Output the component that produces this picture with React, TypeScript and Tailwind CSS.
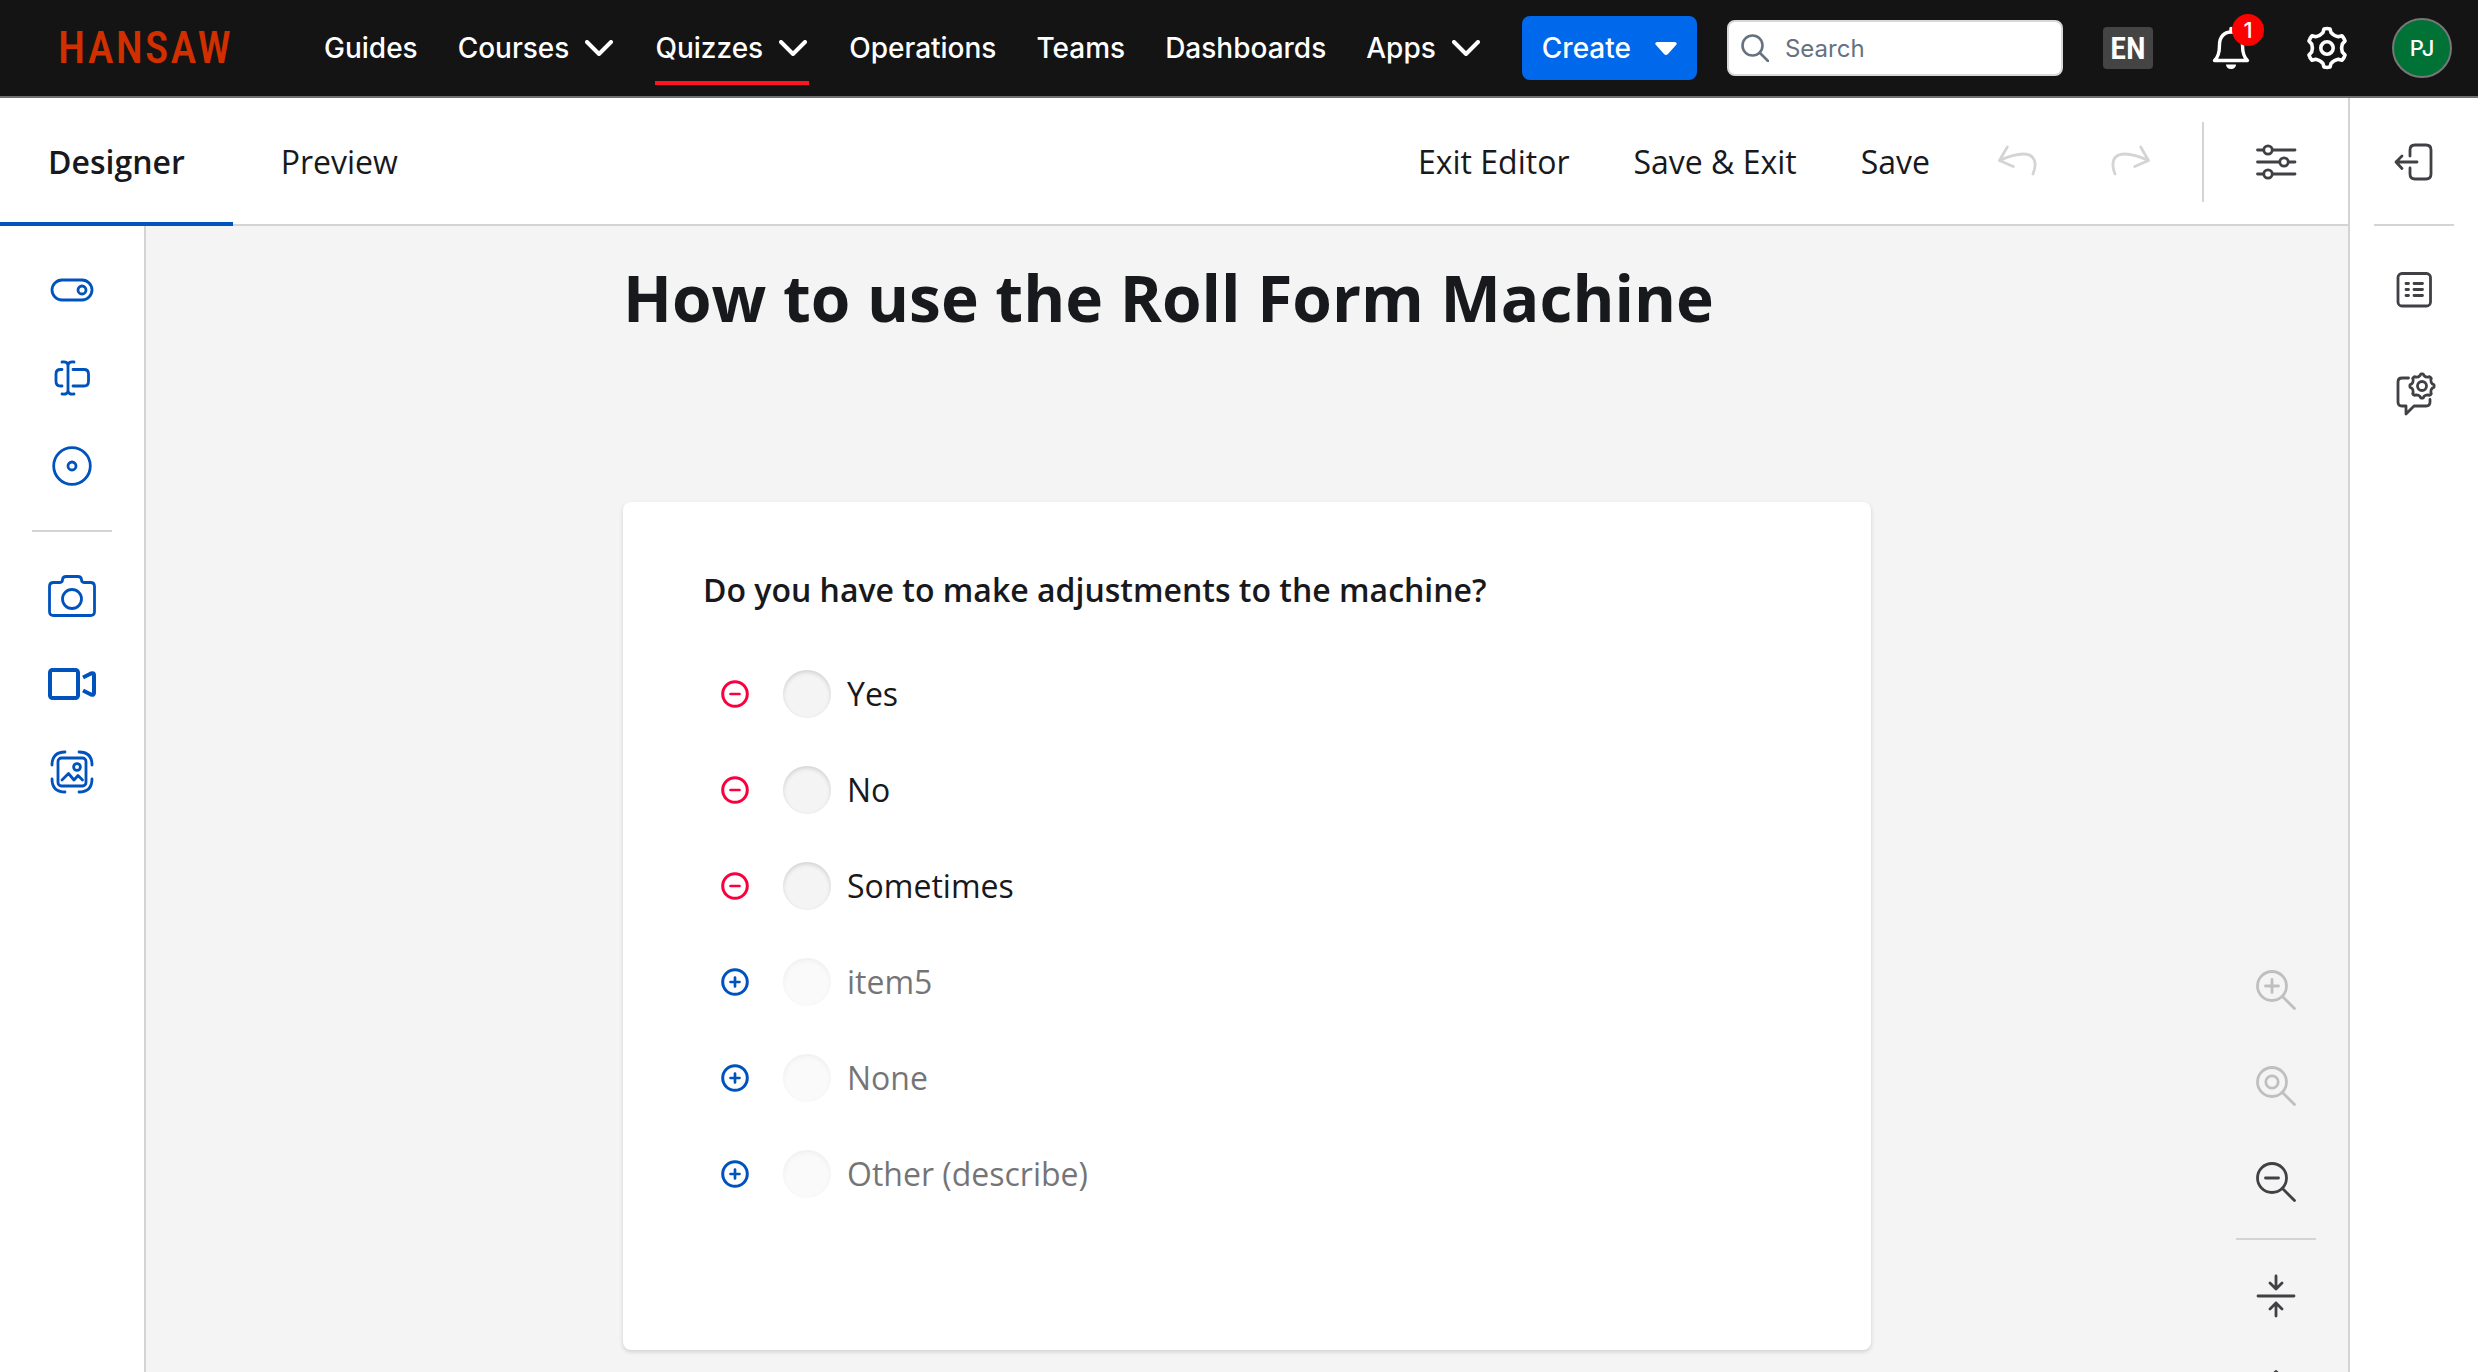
import React, { useState } from "react";

type IconProps = { className?: string; children: React.ReactNode };

function Icon({ className = "size-12", children }: IconProps) {
  return (
    <svg
      viewBox="0 0 48 48"
      className={className}
      fill="none"
      stroke="currentColor"
      strokeWidth={2.8}
      strokeLinecap="round"
      strokeLinejoin="round"
      aria-hidden="true"
    >
      {children}
    </svg>
  );
}

/* Scalloped outline used by the gear glyphs. */
function cogPath(cx: number, cy: number, outer: number, inner: number, teeth: number, flat: number) {
  const step = (Math.PI * 2) / teeth;
  const at = (r: number, a: number) =>
    `${(cx + r * Math.sin(a)).toFixed(2)} ${(cy - r * Math.cos(a)).toFixed(2)}`;
  let d = "";
  for (let i = 0; i < teeth; i++) {
    const a = i * step;
    d += `${i ? "L" : "M"}${at(outer, a - step * flat)}`;
    d += `Q${at(outer * 1.03, a)} ${at(outer, a + step * flat)}`;
    d += `L${at(inner * 1.03, a + step * (flat + 0.1))}`;
    d += `Q${at(inner * 0.9, a + step * 0.5)} ${at(inner * 1.03, a + step * (0.9 - flat))}`;
  }
  return d + "Z";
}

function Chevron() {
  return (
    <svg viewBox="0 0 30 16" className="h-4 w-[30px]" fill="none" stroke="currentColor" strokeWidth={4} strokeLinecap="round" strokeLinejoin="round" aria-hidden="true">
      <path d="M2 2 14 14 26 2" />
    </svg>
  );
}

const navItems = [
  { label: "Guides" },
  { label: "Courses", menu: true },
  { label: "Quizzes", menu: true, active: true },
  { label: "Operations" },
  { label: "Teams" },
  { label: "Dashboards" },
  { label: "Apps", menu: true },
];

function TopBar() {
  return (
    <header className="flex h-[98px] shrink-0 items-center border-b-2 border-[#707070] bg-[#141414] pr-[26px] pl-[58px] font-['Inter',sans-serif] text-white">
      <a href="#home" className="w-[266px] shrink-0 font-['Roboto_Condensed','Roboto',sans-serif] text-[44px] leading-none font-medium tracking-wider text-[#d12f00]">
        HANSAW
      </a>
      <nav className="flex items-center gap-10 text-[28px] leading-9 font-medium">
        {navItems.map((item) => (
          <a key={item.label} href={`#${item.label.toLowerCase()}`} className="relative flex items-center gap-4">
            {item.label}
            {item.menu && <Chevron />}
            {item.active && <span className="absolute -bottom-[19px] left-0 h-1 w-full bg-[#ff1420]" />}
          </a>
        ))}
      </nav>
      <button className="ml-10 flex h-16 items-center gap-6 rounded-lg bg-[#0069eb] px-5 text-[28px] font-medium">
        Create
        <svg viewBox="0 0 22 13" className="h-[13px] w-[22px]" fill="currentColor" aria-hidden="true">
          <path d="M2 0H20Q23 1 21 3L13 12Q11 14 9 12L1 3Q-1 1 2 0Z" />
        </svg>
      </button>
      <label className="ml-[30px] flex h-14 w-[336px] items-center gap-4 rounded-lg border-2 border-[#d8d8d8] bg-white px-3 text-[#66727f]">
        <svg viewBox="0 0 28 28" className="size-7 shrink-0" fill="none" stroke="currentColor" strokeWidth={2.6} strokeLinecap="round" aria-hidden="true">
          <circle cx="11.5" cy="11.5" r="10" />
          <path d="m19 19 8 8" />
        </svg>
        <input type="search" placeholder="Search" aria-label="Search" className="w-full min-w-0 bg-transparent pt-0.5 text-2xl outline-none placeholder:text-[#66727f]" />
      </label>
      <div className="ml-auto flex items-center">
        <button className="flex h-[42px] w-[50px] items-center justify-center rounded bg-[#444] font-['Roboto_Condensed','Roboto',sans-serif] text-[32px] leading-none font-semibold">EN</button>
        <button aria-label="Notifications, 1 new" className="relative ml-[56px]">
          <svg viewBox="0 0 44 44" className="size-11" fill="none" stroke="currentColor" strokeWidth={3.4} strokeLinejoin="round" strokeLinecap="round" aria-hidden="true">
            <path d="M22 2.500v3.500M5.500 34.500C9.500 31 10.500 27 10.500 19C10.500 11 15 6 22 6S33.500 11 33.500 19C33.500 27 34.500 31 38.500 34.500Z" />
            <path d="M17 38.500h10c0 2.500-2 4.500-5 4.500s-5-2-5-4.500Z" fill="currentColor" stroke="none" />
          </svg>
          <span className="absolute -top-3 left-[23px] flex size-8 items-center justify-center rounded-full bg-[#ff0000] text-[22px] font-medium">1</span>
        </button>
        <button aria-label="Settings" className="ml-[52px]">
          <svg viewBox="0 0 44 44" className="size-11" fill="none" stroke="currentColor" strokeWidth={3.6} strokeLinejoin="round" aria-hidden="true">
            <path d={cogPath(22, 22, 19.3, 15.4, 6, 0.15)} />
            <circle cx="22" cy="22" r="6.2" />
          </svg>
        </button>
        <button aria-label="Account PJ" className="ml-[43px] flex size-[60px] items-center justify-center rounded-full border-2 border-[#777] bg-[#007236] text-[22px] font-medium">PJ</button>
      </div>
    </header>
  );
}

function Toolbar({ tab, onTab }: { tab: string; onTab: (t: string) => void }) {
  return (
    <div className="flex h-32 shrink-0 items-stretch border-b-2 border-[#d4d4d4] bg-white text-[32px] leading-[48px]">
      <div role="tablist" className="flex">
        {["Designer", "Preview"].map((name) => (
          <button
            key={name}
            role="tab"
            aria-selected={tab === name}
            onClick={() => onTab(name)}
            className={
              tab === name
                ? "-mb-0.5 border-b-4 border-[#0052bd] px-12 pt-1 font-semibold"
                : "-mb-0.5 border-b-4 border-transparent px-12 pt-1"
            }
          >
            {name}
          </button>
        ))}
      </div>
      <div className="ml-auto flex items-center pt-0.5">
        {["Exit Editor", "Save & Exit", "Save"].map((name) => (
          <button key={name} className="px-8">{name}</button>
        ))}
        <button aria-label="Undo" disabled className="ml-8 text-[#d4d4d4]">
          <Icon><path d="M13.300 9 5.500 22.500 19.300 28.500M5.500 22.500Q20 16 29 16C42 16 43 26 39 36" /></Icon>
        </button>
        <button aria-label="Redo" disabled className="mr-12 ml-16 text-[#d4d4d4]">
          <Icon><path d="M34.700 9 42.500 22.500 28.700 28.500M42.500 22.500Q28 16 19 16C6 16 5 26 9 36" /></Icon>
        </button>
        <span className="h-20 w-0.5 bg-[#d4d4d4]" />
        <button aria-label="Options" className="mx-12 text-[#404045]">
          <Icon>
            <path d="M5.500 12H11.500M20.500 12h22.500M5.500 24h22M36.500 24h6.500M5.500 36h6M20.500 36h22.500" />
            <circle cx="16" cy="12" r="4.2" /><circle cx="32" cy="24" r="4.2" /><circle cx="16" cy="36" r="4.2" />
          </Icon>
        </button>
      </div>
    </div>
  );
}

const questionTools = [
  { label: "Toggle", icon: <Icon><rect x="4" y="14" width="40" height="20" rx="10" /><circle cx="34" cy="24" r="4" /></Icon> },
  { label: "Text field", icon: <Icon><path d="M14 15.500H12.500Q8 15.500 8 20V27.500Q8 32 12.500 32H14M25 15.500H36Q40.500 15.500 40.500 20V27.500Q40.500 32 36 32H25M20 10V38M14 8Q20 7 20 12Q20 7 26 8M14 40Q20 41 20 36Q20 41 26 40" /></Icon> },
  { label: "Single choice", icon: <Icon><circle cx="24" cy="24" r="18.300" /><circle cx="24" cy="24" r="4" /></Icon> },
];

const mediaTools = [
  { label: "Photo", icon: <Icon><path d="M1.500 14.500Q1.500 10.500 5.500 10.500H12Q14.500 10.500 14.500 7.500Q15 4.500 18 4.500H30Q33 4.500 33.500 7.500Q33.500 10.500 36 10.500H42.500Q46.500 10.500 46.500 14.500V39.500Q46.500 43.500 42.500 43.500H5.500Q1.500 43.500 1.500 39.500Z" /><circle cx="24" cy="27" r="9.500" /></Icon> },
  { label: "Video", icon: <Icon><g strokeWidth="4" strokeLinecap="butt"><rect x="2" y="10" width="28" height="28" rx="2.500" /><path d="M35 17.500 43 13.500Q46 12.500 46 15V33Q46 35.500 43 34.500L35 30.500" /></g></Icon> },
  { label: "Image", icon: <Icon><rect x="10" y="10" width="28" height="28" rx="3.500" /><circle cx="29" cy="19" r="3.400" /><path d="M14 32 20.500 25.500 26 32 30 27.500 34.500 32" /><path d="M17 4Q4 4 4 17M31 4Q44 4 44 17M4 31Q4 44 17 44M44 31Q44 44 31 44" /></Icon> },
];

function LeftTools() {
  return (
    <aside className="flex w-[146px] shrink-0 flex-col items-center border-r-2 border-[#d4d4d4] bg-white py-5 text-[#0052bd]">
      {questionTools.map((t) => (
        <button key={t.label} aria-label={t.label} className="flex h-[88px] items-center">{t.icon}</button>
      ))}
      <hr className="my-5 w-20 border-t-2 border-[#d4d4d4]" />
      {mediaTools.map((t) => (
        <button key={t.label} aria-label={t.label} className="flex h-[88px] items-center">{t.icon}</button>
      ))}
    </aside>
  );
}

const options = [
  { label: "Yes", added: true },
  { label: "No", added: true },
  { label: "Sometimes", added: true },
  { label: "item5", added: false },
  { label: "None", added: false },
  { label: "Other (describe)", added: false },
];

function OptionRow({ label, added }: { label: string; added: boolean }) {
  return (
    <li className="flex h-24 items-center">
      <button aria-label={`${added ? "Remove" : "Add"} ${label}`} className={added ? "mx-[18px] text-[#fa003c]" : "mx-[18px] text-[#0052bd]"}>
        <svg viewBox="0 0 28 28" className="size-7" fill="none" stroke="currentColor" strokeWidth={3} strokeLinecap="round" aria-hidden="true">
          <circle cx="14" cy="14" r="12.300" />
          <path d={added ? "M9.500 14h9" : "M9.500 14h9M14 9.500v9"} strokeWidth={2.700} />
        </svg>
      </button>
      <label className={added ? "ml-4 flex items-center gap-4" : "ml-4 flex items-center gap-4 opacity-60"}>
        <input
          type="radio"
          name="adjustments"
          disabled={!added}
          className={
            added
              ? "size-12 appearance-none rounded-full bg-[#f4f4f4] shadow-[inset_0_2px_4px_rgba(0,0,0,0.15)]"
              : "size-12 appearance-none rounded-full bg-[#f7f7f7] shadow-[inset_0_2px_4px_rgba(0,0,0,0.08)]"
          }
        />
        {label}
      </label>
    </li>
  );
}

function Lens({ children }: { children: React.ReactNode }) {
  return <Icon><circle cx="20" cy="20" r="14.500" />{children}<path d="M30.500 30.500 42.500 42.500" /></Icon>;
}

function Canvas() {
  return (
    <main className="relative flex min-w-0 flex-1 justify-center overflow-hidden bg-[#f4f4f4] px-36 pt-8">
      <div className="w-full max-w-[1248px]">
        <h1 className="text-[64px] leading-[80px] font-bold">How to use the Roll Form Machine</h1>
        <section className="mt-[164px] rounded-lg bg-white px-20 pt-16 pb-32 text-[32px] leading-[48px] shadow-[0_2px_4px_rgba(0,0,0,0.15)]">
          <h2 className="mb-8 font-semibold">Do you have to make adjustments to the machine?</h2>
          <ul>{options.map((o) => <OptionRow key={o.label} {...o} />)}</ul>
        </section>
      </div>
      <div className="absolute right-0 bottom-0 flex w-36 flex-col items-center text-[#404045]">
        <button aria-label="Zoom in" disabled className="flex h-24 items-center text-[#bfbfbf]"><Lens><path d="M13.500 20h13M20 13.500v13" /></Lens></button>
        <button aria-label="Zoom to 100%" disabled className="flex h-24 items-center text-[#bfbfbf]"><Lens><circle cx="20" cy="20" r="6.200" /></Lens></button>
        <button aria-label="Zoom out" className="flex h-24 items-center"><Lens><path d="M13.500 20h13" /></Lens></button>
        <hr className="my-2 w-20 border-t-2 border-[#d4d4d4]" />
        <button aria-label="Collapse all" className="flex h-24 items-center">
          <Icon><path d="M6 24h36M24 4v13M18 11l6 6 6-6M24 44V31M18 37l6-6 6 6" /></Icon>
        </button>
        <button aria-label="Expand all" className="flex h-7 items-start overflow-hidden pt-6">
          <Icon className="size-12 shrink-0"><path d="M24 4v13M18 9.500l6-6 6 6M6 24h36M24 44V31M18 38l6 6 6-6" /></Icon>
        </button>
      </div>
    </main>
  );
}

function RightPanel() {
  return (
    <aside className="flex w-[130px] shrink-0 flex-col items-center border-l-2 border-[#d4d4d4] bg-white text-[#404045]">
      <button aria-label="Expand panel" className="flex h-[126px] items-center pt-0.5">
        <Icon><path d="M20 18V12Q20 7 25 7H36Q41 7 41 12V36Q41 41 36 41H25Q20 41 20 36V30M27 24H6M12 18 6 24l6 6.500" /></Icon>
      </button>
      <hr className="w-20 border-t-2 border-[#d4d4d4]" />
      <button aria-label="Properties" className="mt-3 flex h-[104px] items-center">
        <Icon><rect x="8" y="7.500" width="32.500" height="32.500" rx="4" /><path d="M16 17.500h2.500M24 17.500h8.500M16 23.500h2.500M24 23.500h8.500M16 29.500h2.500M24 29.500h8.500" /></Icon>
      </button>
      <button aria-label="Logic" className="flex h-[104px] items-center">
        <Icon>
          <path d="M18.500 8H12Q8 8 8 12V32Q8 36 12 36H16V44L24 36H36Q40 36 40 32V29.500" />
          <path d={cogPath(32, 16, 12, 10.4, 8, 0.13)} />
          <circle cx="32" cy="16" r="4.500" />
        </Icon>
      </button>
    </aside>
  );
}

export default function App() {
  const [tab, setTab] = useState("Designer");
  return (
    <div className="flex h-screen flex-col overflow-hidden font-['Open_Sans',sans-serif] text-[#18191c]">
      <TopBar />
      <div className="flex min-h-0 flex-1">
        <div className="flex min-w-0 flex-1 flex-col">
          <Toolbar tab={tab} onTab={setTab} />
          <div className="flex min-h-0 flex-1">
            <LeftTools />
            <Canvas />
          </div>
        </div>
        <RightPanel />
      </div>
    </div>
  );
}
